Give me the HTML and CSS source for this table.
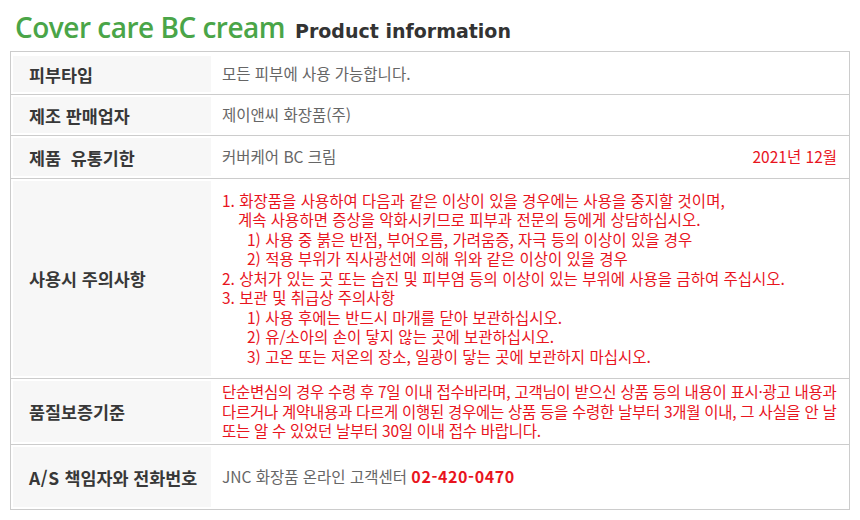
FILE: index.html
```html
<!DOCTYPE html>
<html lang="ko">
<head>
<meta charset="utf-8">
<title>Cover care BC cream - Product information</title>
<link rel="stylesheet" href="styles.css">
</head>
<body>
<div class="page">
  <h1 class="title"><span class="title-main">Cover care BC cream</span><span class="title-sub">Product information</span></h1>
  <div class="table">
    <div class="row">
      <div class="label">피부타입</div>
      <div class="value">모든 피부에 사용 가능합니다.</div>
    </div>
    <div class="row">
      <div class="label">제조 판매업자</div>
      <div class="value">제이앤씨 화장품(주)</div>
    </div>
    <div class="row row--date">
      <div class="label">제품&nbsp; 유통기한</div>
      <div class="value value--split"><span>커버케어 BC 크림</span><span class="red">2021년 12월</span></div>
    </div>
    <div class="row row--warn">
      <div class="label">사용시 주의사항</div>
      <div class="value value--block red">
        <p class="l0">1. 화장품을 사용하여 다음과 같은 이상이 있을 경우에는 사용을 중지할 것이며,</p>
        <p class="l1">계속 사용하면 증상을 악화시키므로 피부과 전문의 등에게 상담하십시오.</p>
        <p class="l2">1) 사용 중 붉은 반점, 부어오름, 가려움증, 자극 등의 이상이 있을 경우</p>
        <p class="l2">2) 적용 부위가 직사광선에 의해 위와 같은 이상이 있을 경우</p>
        <p class="l0">2. 상처가 있는 곳 또는 습진 및 피부염 등의 이상이 있는 부위에 사용을 금하여 주십시오.</p>
        <p class="l0">3. 보관 및 취급상 주의사항</p>
        <p class="l2">1) 사용 후에는 반드시 마개를 닫아 보관하십시오.</p>
        <p class="l2">2) 유/소아의 손이 닿지 않는 곳에 보관하십시오.</p>
        <p class="l2">3) 고온 또는 저온의 장소, 일광이 닿는 곳에 보관하지 마십시오.</p>
      </div>
    </div>
    <div class="row row--quality">
      <div class="label">품질보증기준</div>
      <div class="value value--block value--tight red">
        <p>단순변심의 경우 수령 후 7일 이내 접수바라며, 고객님이 받으신 상품 등의 내용이 표시·광고 내용과</p>
        <p>다르거나 계약내용과 다르게 이행된 경우에는 상품 등을 수령한 날부터 3개월 이내, 그 사실을 안 날</p>
        <p>또는 알 수 있었던 날부터 30일 이내 접수 바랍니다.</p>
      </div>
    </div>
    <div class="row row--as">
      <div class="label"><span class="latin">A/S</span>&nbsp;책임자와 전화번호</div>
      <div class="value">JNC 화장품 온라인 고객센터&nbsp;<span class="phone">02-420-0470</span></div>
    </div>
  </div>
</div>
</body>
</html>
```

FILE: styles.css
```css
html, body {
  margin: 0;
  padding: 0;
  background: #ffffff;
}

body {
  font-family: "Noto Sans CJK KR", "Noto Sans", sans-serif;
  color: #666666;
}

.page {
  width: 860px;
  height: 520px;
  padding: 0 10px;
  box-sizing: border-box;
}

.title {
  margin: 0;
  height: 51px;
  display: flex;
  align-items: baseline;
  padding: 8px 0 0 5px;
  box-sizing: border-box;
  font-weight: normal;
}

.title-main {
  font-family: "Open Sans", sans-serif;
  font-size: 28px;
  font-weight: 600;
  letter-spacing: -0.5px;
  color: #4aa548;
  line-height: 38px;
}

.title-sub {
  font-family: "DejaVu Sans", sans-serif;
  font-size: 19px;
  font-weight: 700;
  color: #333333;
  margin-left: 10px;
}

.table {
  width: 840px;
  box-sizing: border-box;
  border: 1px solid #cccccc;
}

.row {
  display: grid;
  grid-template-columns: 198px 1fr;
  padding: 2px 0 2px 2px;
  border-top: 1px solid #cccccc;
}

.row:first-child {
  border-top: 0;
  padding-top: 4px;
}

.label {
  background: #f7f7f7;
  display: flex;
  align-items: center;
  padding-left: 16px;
  min-height: 36px;
  font-size: 17.4px;
  font-weight: 700;
  color: #383838;
  white-space: nowrap;
}

.latin {
  letter-spacing: 0.6px;
}

.value {
  display: flex;
  align-items: center;
  padding: 0 12px 0 11px;
  font-size: 15.5px;
  line-height: 19.5px;
  white-space: nowrap;
}

.value--split {
  justify-content: space-between;
}

.value--block {
  flex-direction: column;
  align-items: flex-start;
  justify-content: center;
}

.value--tight {
  letter-spacing: -0.28px;
}

.value--block p {
  margin: 0;
}

.red {
  color: #e8141e;
}

.l1 { padding-left: 16px; }
.l2 { padding-left: 25px; }

.row--date .label { min-height: 38px; }
.row--warn .label { min-height: 195px; }
.row--quality .label { min-height: 61px; }
.row--as .label { min-height: 60px; }

.phone {
  color: #e8141e;
  font-weight: 700;
  font-size: 16px;
  letter-spacing: 0.6px;
}
```
